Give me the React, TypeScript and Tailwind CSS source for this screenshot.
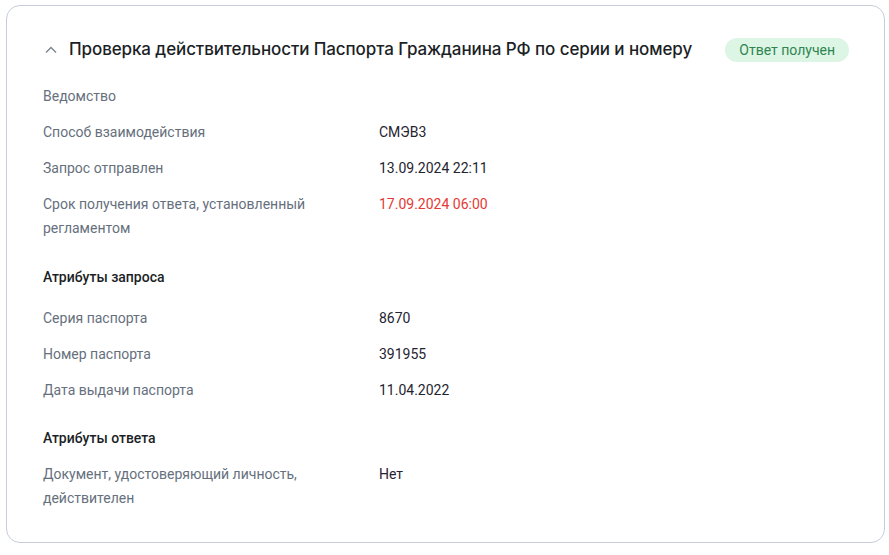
import React from 'react';

type Row = { label: string; value?: string; danger?: boolean };

const mainRows: Row[] = [
  { label: 'Ведомство' },
  { label: 'Способ взаимодействия', value: 'СМЭВ3' },
  { label: 'Запрос отправлен', value: '13.09.2024 22:11' },
  { label: 'Срок получения ответа, установленный регламентом', value: '17.09.2024 06:00', danger: true },
];

const requestRows: Row[] = [
  { label: 'Серия паспорта', value: '8670' },
  { label: 'Номер паспорта', value: '391955' },
  { label: 'Дата выдачи паспорта', value: '11.04.2022' },
];

const responseRows: Row[] = [
  { label: 'Документ, удостоверяющий личность, действителен', value: 'Нет' },
];

const InfoRow: React.FC<{ row: Row }> = ({ row }) => (
  <div className="grid grid-cols-[336px_1fr] leading-6">
    <div className="pr-8 text-[#66707d]">{row.label}</div>
    <div className={row.danger ? 'text-[#e53935]' : 'text-[#1f2430]'}>{row.value}</div>
  </div>
);

export default function App() {
  return (
    <div className="pl-[6px] pt-[5px] w-[889px] h-[555px] bg-white font-['Roboto',sans-serif] text-[14px]">
      <div className="w-[879px] h-[538px] rounded-[14px] border border-[#c5cddb] pl-[36px] pr-[36px] pt-[32px] pb-[32px]">
        {/* Header */}
        <div className="flex items-center h-6">
          <svg width="14" height="14" viewBox="0 0 14 14" className="ml-[1px] mr-[11px]">
            <path d="M2 9.5 L7 4.5 L12 9.5" fill="none" stroke="#7a8491" strokeWidth="1.4" />
          </svg>
          <h1 className="font-['Inter',sans-serif] font-medium text-[17px] text-[#1c1f26] tracking-[-0.1px]">
            Проверка действительности Паспорта Гражданина РФ по серии и номеру
          </h1>
          <span className="ml-auto mr-[-1px] h-6 px-[14px] rounded-full bg-[#ddf5e4] text-[#2e8550] text-[14px] leading-6">
            Ответ получен
          </span>
        </div>

        {/* Main info */}
        <div className="mt-[22px] flex flex-col gap-3">
          {mainRows.map((r) => (
            <InfoRow key={r.label} row={r} />
          ))}
        </div>

        <div className="mt-[25px] font-medium text-[#1c1f26] leading-6">Атрибуты запроса</div>
        <div className="mt-[17px] flex flex-col gap-3">
          {requestRows.map((r) => (
            <InfoRow key={r.label} row={r} />
          ))}
        </div>

        <div className="mt-6 font-medium text-[#1c1f26] leading-6">Атрибуты ответа</div>
        <div className="mt-3 flex flex-col gap-3">
          {responseRows.map((r) => (
            <InfoRow key={r.label} row={r} />
          ))}
        </div>
      </div>
    </div>
  );
}
